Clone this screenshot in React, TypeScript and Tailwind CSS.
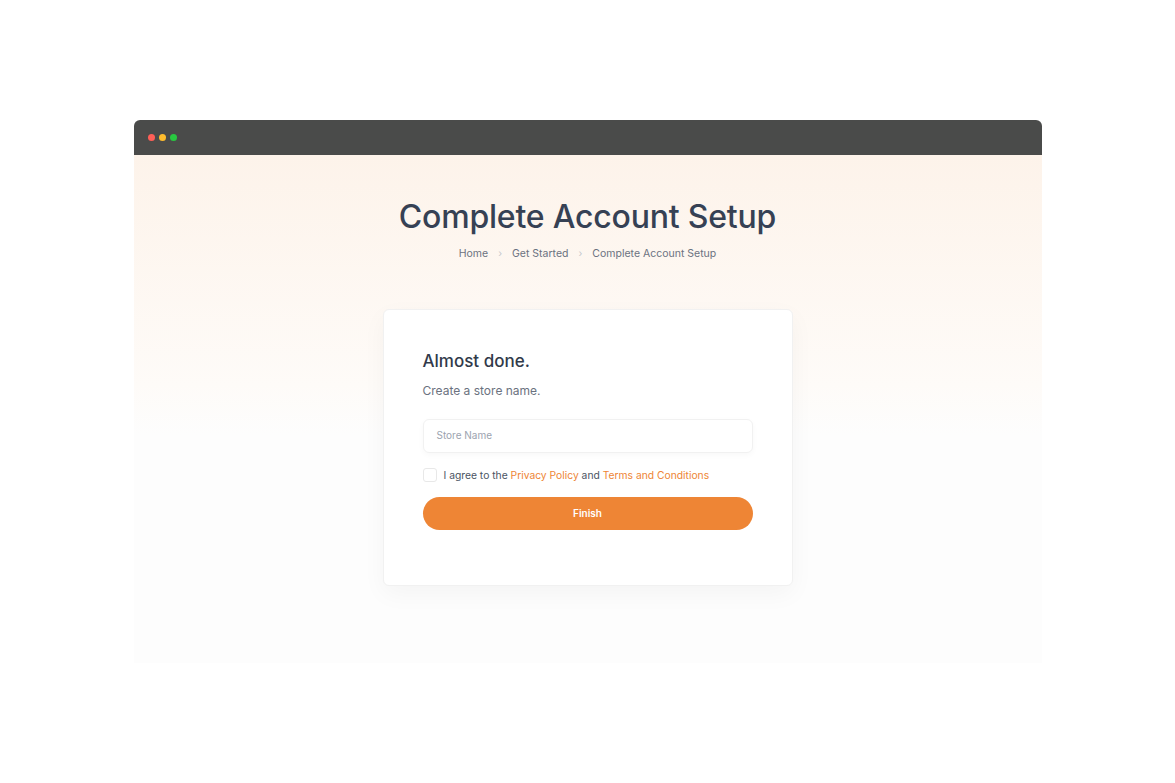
import React from 'react'

const App = () => {
  return (
    <div
      className="w-[1175px] h-[783px] bg-white flex justify-center pt-[120px]"
      style={{ fontFamily: 'Inter, "Noto Sans", sans-serif' }}
    >
      <div className="w-[908px] h-[543px] flex flex-col rounded-t-[6px] overflow-hidden">
        {/* title bar */}
        <div className="h-[35px] bg-[#4a4b4a] flex items-center gap-[4px] pl-[14px] shrink-0">
          <span className="w-[7px] h-[7px] rounded-full bg-[#fe5f57]" />
          <span className="w-[7px] h-[7px] rounded-full bg-[#febc2e]" />
          <span className="w-[7px] h-[7px] rounded-full bg-[#28c840]" />
        </div>

        <div className="flex-1 flex flex-col items-center bg-[linear-gradient(180deg,#fdf3ea_0px,#fefbf8_230px,#fdfdfd_280px,#fdfdfd_100%)]">
          <h1 className="mt-[42px] text-[32px] leading-[40px] font-medium text-[#364154] tracking-[-0.2px]">
            Complete Account Setup
          </h1>
          <div className="mt-[9px] flex items-center text-[10.5px] text-[#6b7280]">
            <span>Home</span>
            <span className="mx-[10px] text-[#c4c7cc] text-[10px]">›</span>
            <span>Get Started</span>
            <span className="mx-[10px] text-[#c4c7cc] text-[10px]">›</span>
            <span>Complete Account Setup</span>
          </div>

          <div className="mt-[47px] w-[410px] h-[277px] bg-white rounded-[6px] border border-[#f1f1f1] shadow-[0_8px_24px_rgba(0,0,0,0.04)] px-[39px] pt-[39px]">
            <h2 className="text-[17px] leading-[24px] font-medium text-[#313a4a]">Almost done.</h2>
            <p className="mt-[10px] text-[12px] leading-[16px] text-[#6b7280]">Create a store name.</p>
            <div className="mt-[20px] h-[34px] rounded-[6px] border border-[#f1f1f1] shadow-[0_2px_6px_rgba(0,0,0,0.03)] flex items-center px-[13px]">
              <span className="text-[10px] text-[#9ca3af]">Store Name</span>
            </div>
            <div className="mt-[15px] flex items-center gap-[7px]">
              <span className="w-[14px] h-[14px] rounded-[3px] border border-[#e8e8e8] bg-white" />
              <span className="text-[10.3px] text-[#4b5563]">
                I agree to the <span className="text-[#ee8535]">Privacy Policy</span> and{' '}
                <span className="text-[#ee8535]">Terms and Conditions</span>
              </span>
            </div>
            <button className="mt-[14px] w-full h-[33px] rounded-full bg-[#ee8535] text-white text-[10px] font-semibold">
              Finish
            </button>
          </div>
        </div>
      </div>
    </div>
  )
}

export default App
